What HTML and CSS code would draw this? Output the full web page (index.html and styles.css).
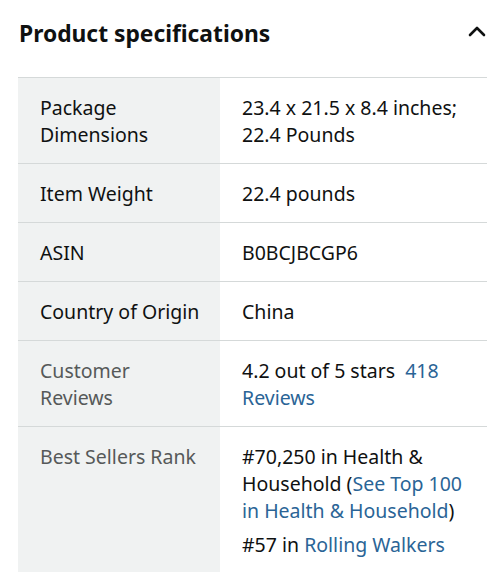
FILE: index.html
```html
<!DOCTYPE html>
<html>
<head>
<meta charset="utf-8">
<link rel="stylesheet" href="styles.css">
</head>
<body>
<div class="section">
  <div class="header">
    <h2 class="title">Product specifications</h2>
    <svg class="chevron" width="18" height="12" viewBox="0 0 18 12"><path d="M2 10 L9 3 L16 10" fill="none" stroke="#0f1111" stroke-width="2.6" stroke-linecap="round" stroke-linejoin="round"/></svg>
  </div>
  <table class="specs">
    <colgroup><col class="col-label"><col></colgroup>
    <tr><th class="label">Package Dimensions</th><td class="value">23.4 x 21.5 x 8.4 inches; 22.4 Pounds</td></tr>
    <tr><th class="label">Item Weight</th><td class="value">22.4 pounds</td></tr>
    <tr><th class="label">ASIN</th><td class="value">B0BCJBCGP6</td></tr>
    <tr><th class="label">Country of Origin</th><td class="value">China</td></tr>
    <tr><th class="label muted">Customer Reviews</th><td class="value">4.2 out of 5 stars&nbsp; <a class="link" href="#">418 Reviews</a></td></tr>
    <tr><th class="label muted">Best Sellers Rank</th><td class="value"><p class="rank">#70,250 in Health &amp; Household (<a class="link" href="#">See Top 100 in Health &amp; Household</a>)</p><p class="rank rank-sub">#57 in <a class="link" href="#">Rolling Walkers</a></p></td></tr>
  </table>
</div>
</body>
</html>
```
FILE: styles.css
```css
html, body {
  margin: 0;
  padding: 0;
  background: #ffffff;
}
body {
  font-family: "Noto Sans", "Open Sans", sans-serif;
  color: #0f1111;
}
.section {
  padding: 0 17px 0 18px;
}
.header {
  display: flex;
  align-items: center;
  justify-content: space-between;
  height: 77px;
}
.title {
  margin: 0 0 11px 1px;
  font-size: 22.8px;
  font-weight: 700;
  letter-spacing: 0;
}
.chevron {
  margin: 0 1px 16px 0;
}
.specs {
  width: 100%;
  table-layout: fixed;
  border-collapse: collapse;
  font-size: 19.5px;
  line-height: 27px;
}
.col-label {
  width: 202px;
}
.specs tr {
  border-top: 1px solid #d5d9d9;
  border-bottom: 1px solid #d5d9d9;
}
.label {
  background: #f0f2f2;
  text-align: left;
  font-weight: 400;
  vertical-align: top;
  padding: 16px 19px 15px 22px;
  color: #0f1111;
}
.label.muted {
  color: #565959;
}
.value {
  vertical-align: top;
  padding: 16px 16px 15px 22px;
}
.link {
  color: #2a6496;
  text-decoration: none;
}
.rank {
  margin: 0;
}
.rank-sub {
  margin-top: 7px;
}
```
